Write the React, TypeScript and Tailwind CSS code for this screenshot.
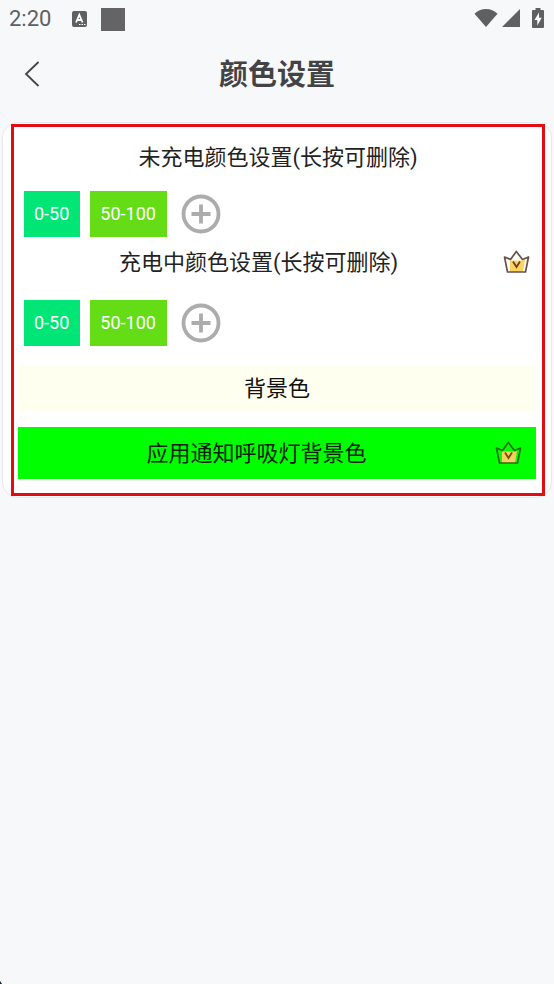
import { useState } from "react";

interface ColorRange {
  id: number;
  label: string;
  color: string;
}

const defaultRanges: ColorRange[] = [
  { id: 1, label: "0-50", color: "bg-[#00e676]" },
  { id: 2, label: "50-100", color: "bg-[#64dd17]" },
];

function StatusBar() {
  return (
    <div className="flex h-9 items-center justify-between pl-[9px] pr-[10px] text-[#5f6062]">
      <div className="flex items-center pt-0.5">
        <span className="text-[22px] leading-6">2:20</span>
        <svg className="ml-[21px] h-4 w-[15px]" viewBox="0 0 15 16">
          <rect width="15" height="16" rx="2" fill="currentColor" />
          <path
            d="M4 11.5 7.3 3.8 10.6 11.5M5.2 9h4.2"
            fill="none"
            stroke="#fff"
            strokeWidth="1.8"
          />
          <path d="M7 13.5h1.5M9.5 13.5H11M12 13.5h1.5" stroke="#fff" />
        </svg>
        <span className="ml-[14px] h-[23px] w-6 bg-[#646466]" />
      </div>
      <div className="flex items-center">
        <svg className="h-[18px] w-6" viewBox="0 0 24 18">
          <path
            d="M12 18 .5 4.7C3.5 1.8 7.5 0 12 0s8.500 1.800 11.500 4.700z"
            fill="currentColor"
          />
        </svg>
        <svg className="ml-1 h-[18px] w-[18px]" viewBox="0 0 18 18">
          <path d="M18 0v18H0z" fill="currentColor" />
        </svg>
        <svg className="ml-3 h-5 w-3" viewBox="0 0 12 20">
          <path
            d="M3.500 0h5v2H11a1 1 0 0 1 1 1v16a1 1 0 0 1-1 1H1a1 1 0 0 1-1-1V3a1 1 0 0 1 1-1h2.500z"
            fill="currentColor"
          />
          <path d="M7 4.500 2.500 12H5.300v5.500L9.700 9.700H7z" fill="#fff" />
        </svg>
      </div>
    </div>
  );
}

function Crown({ green = false }: { green?: boolean }) {
  return (
    <svg className="h-6 w-[27px] flex-none" viewBox="0 0 27 24">
      <path
        d="M7 10.500h13.500l1.500-1-2 12.500H7z"
        fill={green ? "#f5d060" : "#fbd560"}
      />
      <path
        d="M1.500 7 7.500 9.500 13.300 1.500 19.500 9.500 25.500 7 22.500 22H4.500z"
        fill="none"
        stroke={green ? "#2f6b10" : "#6b5248"}
        strokeWidth="1.700"
        strokeLinejoin="round"
      />
      <path
        d="M10 11.500 13.500 17 17 11.500"
        fill="none"
        stroke={green ? "#75500f" : "#6b4028"}
        strokeWidth="1.800"
      />
    </svg>
  );
}

function RangeRow({ label }: { label: string }) {
  const [ranges, setRanges] = useState(defaultRanges);

  return (
    <div className="flex items-center px-[10px]" role="group" aria-label={label}>
      {ranges.map((range) => (
        <button
          key={range.id}
          className={`mr-[10px] h-[46px] pr-[11px] pl-[10px] text-lg text-white ${range.color}`}
          onContextMenu={(e) => {
            e.preventDefault();
            setRanges(ranges.filter((r) => r.id !== range.id));
          }}
        >
          {range.label}
        </button>
      ))}
      <button className="ml-1" aria-label="添加">
        <svg className="h-10 w-10" viewBox="0 0 40 40">
          <g fill="none" stroke="#acacac" strokeWidth="3.800">
            <circle cx="20" cy="20" r="17.500" />
            <path d="M20 10.500v19M10.500 20h19" />
          </g>
        </svg>
      </button>
    </div>
  );
}

function App() {
  return (
    <div className="relative min-h-screen bg-[#f6f8fa] font-['Roboto','Noto_Sans_CJK_SC',sans-serif]">
      <StatusBar />
      <header className="flex h-[78px] items-center px-4">
        <button className="flex w-8 justify-center" aria-label="返回">
          <svg className="h-7 w-4" viewBox="0 0 16 28">
            <path
              d="M14.500 1 2 13 14.500 25"
              fill="none"
              stroke="#444"
              strokeWidth="1.800"
            />
          </svg>
        </button>
        <h1 className="mr-8 flex-1 text-center text-[29px] leading-10 font-bold text-[#434345]">
          颜色设置
        </h1>
      </header>

      <main className="mx-0.5 mt-2 rounded-2xl border border-[#e9e8f0] bg-white py-px pr-1.5 pl-2">
        <div className="border-3 border-[#e20d12] pb-[14px]">
          <h2 className="flex h-16 items-center justify-center pb-1 text-[22px] text-[#222]">
            未充电颜色设置(长按可删除)
          </h2>
          <RangeRow label="未充电颜色" />

          <div className="mb-[13px] flex h-[50px] items-center pr-3">
            <h2 className="flex-1 text-center text-[22px] text-[#222]">
              充电中颜色设置(长按可删除)
            </h2>
            <Crown />
          </div>
          <RangeRow label="充电中颜色" />

          <div className="mt-[19px] flex flex-col gap-4 pr-[6px] pl-1">
            <button className="h-[46px] bg-[#fffff0] text-[22px] text-[#111]">
              背景色
            </button>
            <button className="flex h-[52px] items-center bg-[#00ff00] pr-[14px] text-[22px] text-[#062006]">
              <span className="flex-1 text-center">应用通知呼吸灯背景色</span>
              <Crown green />
            </button>
          </div>
        </div>
      </main>

      <svg className="absolute bottom-0 left-0 h-[3px] w-0.5" viewBox="0 0 2 3">
        <path d="M0 0 2 3H0z" fill="#102030" />
      </svg>
    </div>
  );
}

export default App;
